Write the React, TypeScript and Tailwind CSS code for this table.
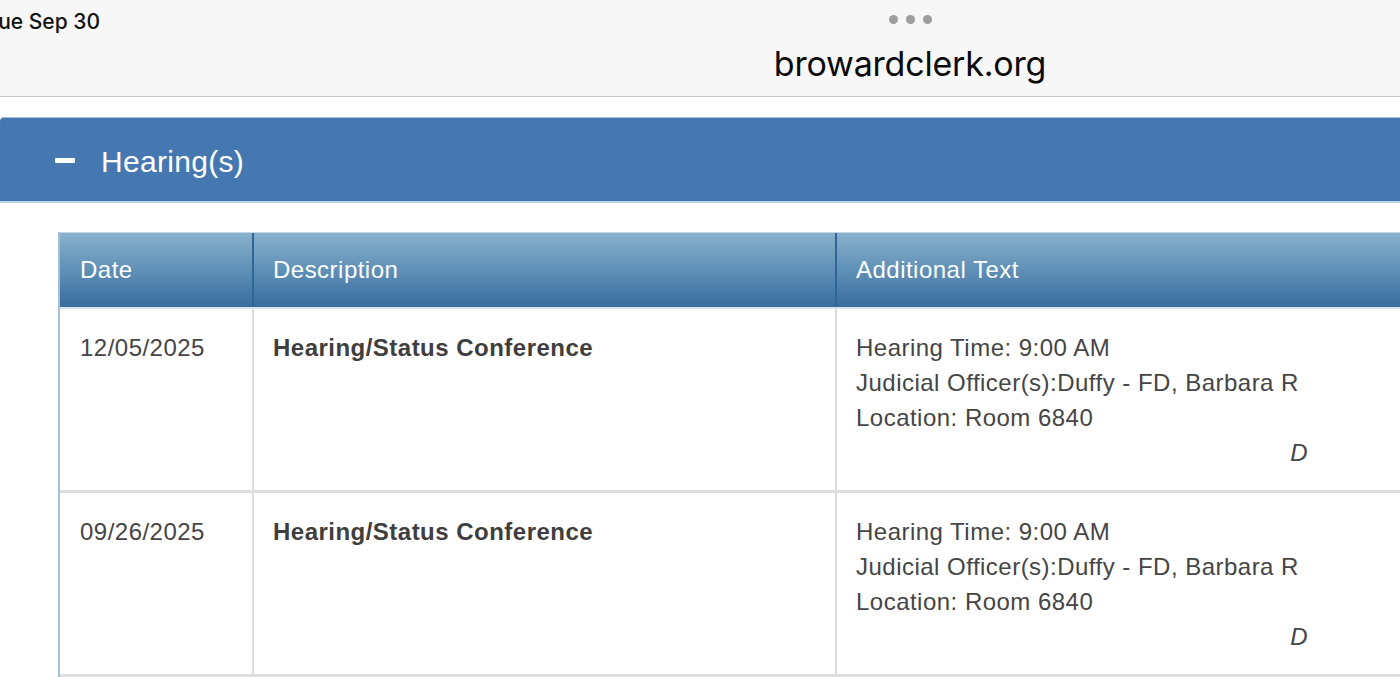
export default function App() {
  const hearings = [
    { date: '12/05/2025', desc: 'Hearing/Status Conference', time: '9:00 AM', officer: 'Duffy - FD, Barbara R', room: 'Room 6840', code: 'D' },
    { date: '09/26/2025', desc: 'Hearing/Status Conference', time: '9:00 AM', officer: 'Duffy - FD, Barbara R', room: 'Room 6840', code: 'D' },
  ]

  return (
    <div className="w-[1400px] h-[677px] overflow-hidden bg-white font-['Liberation_Sans',Arial,sans-serif]">
      {/* browser chrome */}
      <div className="h-[97px] bg-[#f7f7f7] border-b border-[#c6c6c6] flex font-['Inter',sans-serif]">
        <div className="w-[724px] -ml-[14px] pt-[6px] text-[21px] font-medium text-[#111]">Tue Sep 30</div>
        <div className="w-[400px] flex flex-col items-center pt-[15px]">
          <div className="flex gap-[8px]">
            <span className="w-[9px] h-[9px] rounded-full bg-[#9e9e9e]" />
            <span className="w-[9px] h-[9px] rounded-full bg-[#9e9e9e]" />
            <span className="w-[9px] h-[9px] rounded-full bg-[#9e9e9e]" />
          </div>
          <div className="mt-[20px] text-[34px] leading-[40px] text-[#0a0a0a] tracking-[-0.2px]">browardclerk.org</div>
        </div>
      </div>

      {/* section bar */}
      <div className="mt-[20px] h-[86px] bg-[#4578b0] border-t border-[#a6c0da] border-b-2 border-b-[#bcd2e4] rounded-tl-[4px] flex items-center">
        <div className="ml-[55px] mt-[2px] w-[20px] h-[5px] rounded-[1px] bg-white" />
        <div className="ml-[26px] mt-[3px] text-[30px] text-white tracking-[0.3px]">Hearing(s)</div>
      </div>

      {/* table */}
      <div className="mt-[29px] ml-[58px] border-l-2 border-[#a3c0d6]">
        <div className="grid grid-cols-[194px_583px_1fr] h-[77px] bg-gradient-to-b from-[#89b1cb] via-[#5f90b7] to-[#386d9e] border-t border-[#c3d6e3] border-b-2 border-b-[#d5e5ef] text-white text-[24px] tracking-[0.02em]">
          <div className="flex items-center pl-[20px] border-r-2 border-[#2e6797]">Date</div>
          <div className="flex items-center pl-[19px] border-r-2 border-[#2e6797]">Description</div>
          <div className="flex items-center pl-[19px]">Additional Text</div>
        </div>
        {hearings.map((h, i) => (
          <div key={i} className="grid grid-cols-[194px_583px_1fr] border-b-[3px] border-[#dedede] text-[24px] leading-[35px] tracking-[0.02em] text-[#454545]">
            <div className="pl-[20px] pt-[21px] border-r-2 border-[#dcdcdc]">{h.date}</div>
            <div className="pl-[19px] pt-[21px] border-r-2 border-[#dcdcdc] font-bold text-[#3e3e3e]">{h.desc}</div>
            <div className="pl-[19px] pt-[21px] pb-[20px]">
              <div>Hearing Time: {h.time}</div>
              <div>Judicial Officer(s):{h.officer}</div>
              <div>Location: {h.room}</div>
              <div className="w-[452px] text-right italic">{h.code}</div>
            </div>
          </div>
        ))}
      </div>
    </div>
  )
}
